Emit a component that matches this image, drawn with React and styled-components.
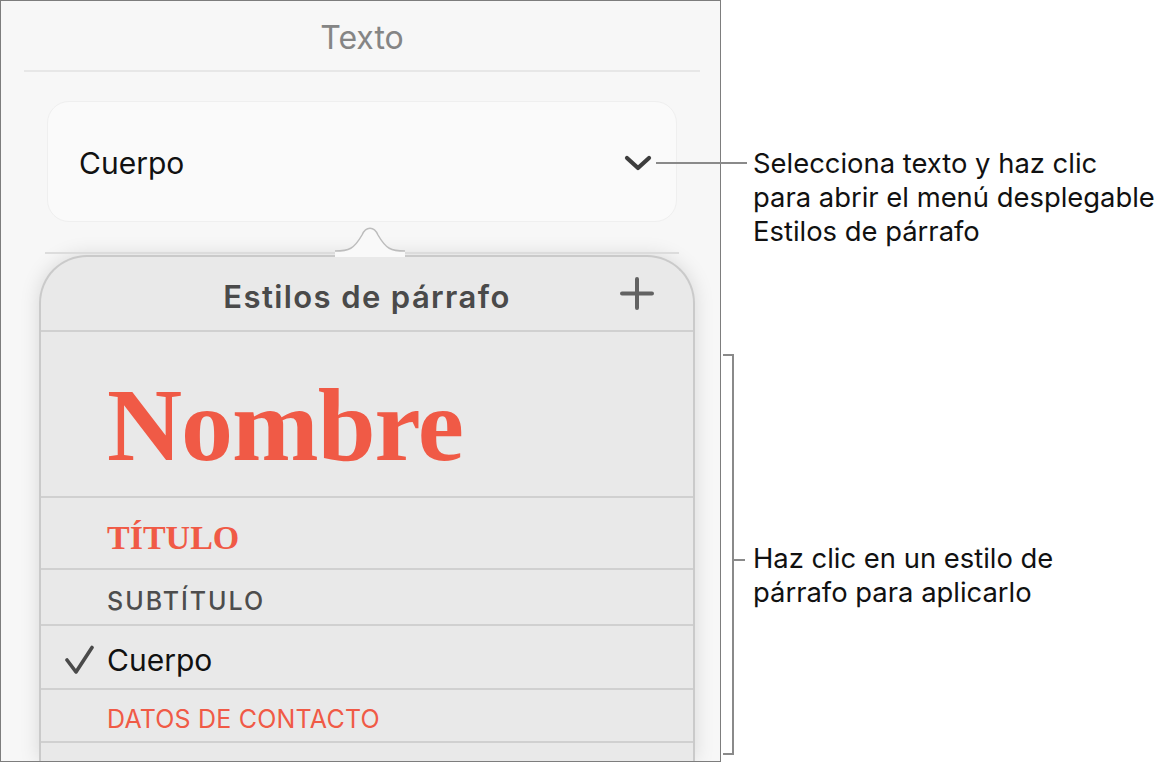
import React from 'react';
import styled, { createGlobalStyle } from 'styled-components';

const GlobalStyle = createGlobalStyle`
  html, body {
    margin: 0;
    padding: 0;
    background: #ffffff;
  }
  body {
    font-family: Inter, "Liberation Sans", Arial, sans-serif;
  }
`;

const SANS = `Inter, "Liberation Sans", Arial, sans-serif`;
const SERIF = `"Liberation Serif", "Times New Roman", serif`;
const ACCENT = '#f05a46';

const Page = styled.div`
  position: relative;
  width: 1168px;
  height: 763px;
  display: flex;
  overflow: hidden;
`;

const Panel = styled.div`
  width: 721px;
  height: 762px;
  box-sizing: border-box;
  border: 1px solid #7d7d7d;
  background: #f7f7f7;
  display: flex;
  flex-direction: column;
  overflow: hidden;
`;

const PanelHeader = styled.div`
  margin: 0 20px 0 23px;
  height: 71px;
  flex-shrink: 0;
  border-bottom: 2px solid #e7e7e7;
  display: flex;
  align-items: center;
  justify-content: center;
  font-family: ${SANS};
  font-size: 32px;
  color: #858585;
  padding-top: 3px;
  box-sizing: border-box;
`;

const StyleSelect = styled.div`
  margin: 29px 0 0 46px;
  width: 630px;
  height: 121px;
  flex-shrink: 0;
  box-sizing: border-box;
  border: 1px solid #efefef;
  border-radius: 22px;
  background: #fafafa;
  display: flex;
  align-items: center;
  justify-content: space-between;
  padding: 2px 24px 0 31px;
`;

const SelectLabel = styled.span`
  font-family: ${SANS};
  font-size: 30px;
  color: #111;
`;

const Divider = styled.div`
  position: relative;
  flex-shrink: 0;
  margin: 30px 0 0 44px;
  width: 634px;
  height: 2px;
  background: #dcdcdc;
`;

const Arrow = styled.svg`
  position: absolute;
  left: 290px;
  top: -31px;
  overflow: visible;
`;

const Popover = styled.div`
  margin: 1px 0 0 38px;
  width: 656px;
  flex: 1;
  box-sizing: border-box;
  background: #e9e9e9;
  border: 2px solid #cacaca;
  border-bottom: none;
  border-radius: 48px 48px 0 0;
  box-shadow: 0 0 20px rgba(0, 0, 0, 0.13);
  display: flex;
  flex-direction: column;
  overflow: hidden;
`;

const PopoverHeader = styled.div`
  height: 75px;
  flex-shrink: 0;
  box-sizing: border-box;
  border-bottom: 2px solid #d0d0d0;
  display: grid;
  grid-template-columns: 1fr auto 1fr;
  align-items: center;
  padding: 5px 39px 0 39px;
`;

const PopoverTitle = styled.span`
  grid-column: 2;
  font-family: ${SANS};
  font-size: 31px;
  font-weight: 600;
  letter-spacing: 1.4px;
  color: #4a4a4a;
`;

const PlusButton = styled.svg`
  grid-column: 3;
  justify-self: end;
  margin-top: -4px;
`;

const StyleRow = styled.div`
  height: ${({ $h }) => $h}px;
  flex-shrink: 0;
  box-sizing: border-box;
  border-bottom: 2px solid #d0d0d0;
  display: flex;
  align-items: center;
  padding: ${({ $pad }) => $pad || 0}px 0 0 24px;
`;

const CheckSlot = styled.div`
  width: 42px;
  display: flex;
  align-items: center;
`;

const NameStyle = styled.span`
  font-family: ${SERIF};
  font-weight: 700;
  font-size: 104px;
  letter-spacing: -1px;
  color: ${ACCENT};
`;

const TitleStyle = styled.span`
  font-family: ${SERIF};
  font-weight: 700;
  font-size: 34px;
  color: ${ACCENT};
`;

const SubtitleStyle = styled.span`
  font-family: ${SANS};
  font-weight: 500;
  font-size: 25px;
  letter-spacing: 2px;
  color: #4d4d4d;
`;

const BodyStyle = styled.span`
  font-family: ${SANS};
  font-size: 30px;
  color: #111;
`;

const ContactStyle = styled.span`
  font-family: ${SANS};
  font-size: 25px;
  letter-spacing: 0.2px;
  color: ${ACCENT};
`;

/* annotations drawn over the screenshot */
const Callout = styled.div`
  position: absolute;
  left: ${({ $x }) => $x}px;
  top: ${({ $y }) => $y}px;
  display: flex;
  align-items: flex-start;
`;

const Leader = styled.div`
  width: ${({ $w }) => $w}px;
  height: 2px;
  margin-top: 16px;
  background: #8a8a8a;
  flex-shrink: 0;
`;

const CalloutText = styled.p`
  margin: 0 0 0 ${({ $gap }) => $gap}px;
  font-family: ${SANS};
  font-size: 27.4px;
  line-height: 34px;
  color: #111;
  white-space: nowrap;
`;

const Bracket = styled.div`
  position: absolute;
  left: 723px;
  top: 354px;
  width: 9px;
  height: 397px;
  border: 2px solid #8a8a8a;
  border-left: none;
`;

const BracketTick = styled.div`
  position: absolute;
  left: 100%;
  top: 203px;
  width: 13px;
  height: 2px;
  background: #8a8a8a;
`;

const Chevron = () => (
  <svg width="28" height="18" viewBox="0 0 28 18">
    <polyline points="3,4 14,14 25,4" fill="none" stroke="#3d3d3d" strokeWidth="4.2" strokeLinecap="round" strokeLinejoin="round" />
  </svg>
);

const Check = () => (
  <svg width="30" height="30" viewBox="0 0 30 30">
    <polyline points="2,15 11,27 27,2.5" fill="none" stroke="#4a4a4a" strokeWidth="3.6" strokeLinecap="round" strokeLinejoin="round" />
  </svg>
);

export default function App() {
  return (
    <Page>
      <GlobalStyle />
      <Panel>
        <PanelHeader>Texto</PanelHeader>
        <StyleSelect>
          <SelectLabel>Cuerpo</SelectLabel>
          <Chevron />
        </StyleSelect>
        <Divider>
          <Arrow width="70" height="36" viewBox="0 0 70 36">
            <path d="M0 30 C14 30 19 28 27 14 C31 5 39 5 43 14 C51 28 56 30 70 30 L70 36 L0 36 Z" fill="#f9f9f9" />
            <path d="M0 30 C14 30 19 28 27 14 C31 5 39 5 43 14 C51 28 56 30 70 30" fill="none" stroke="#bdbdbd" strokeWidth="1.5" />
          </Arrow>
        </Divider>
        <Popover>
          <PopoverHeader>
            <PopoverTitle>Estilos de párrafo</PopoverTitle>
            <PlusButton width="34" height="34" viewBox="0 0 34 34">
              <path d="M17 2 V31 M2 16.5 H32" stroke="#626262" strokeWidth="4" strokeLinecap="round" />
            </PlusButton>
          </PopoverHeader>
          <StyleRow $h={166} $pad={20}>
            <CheckSlot />
            <NameStyle>Nombre</NameStyle>
          </StyleRow>
          <StyleRow $h={72} $pad={9}>
            <CheckSlot />
            <TitleStyle>TÍTULO</TitleStyle>
          </StyleRow>
          <StyleRow $h={56} $pad={8}>
            <CheckSlot />
            <SubtitleStyle>SUBTÍTULO</SubtitleStyle>
          </StyleRow>
          <StyleRow $h={64} $pad={6}>
            <CheckSlot>
              <Check />
            </CheckSlot>
            <BodyStyle>Cuerpo</BodyStyle>
          </StyleRow>
          <StyleRow $h={53} $pad={7}>
            <CheckSlot />
            <ContactStyle>DATOS DE CONTACTO</ContactStyle>
          </StyleRow>
          <StyleRow $h={60} />
        </Popover>
      </Panel>

      <Callout $x={656} $y={146}>
        <Leader $w={91} />
        <CalloutText $gap={6}>
          Selecciona texto y haz clic
          <br />
          para abrir el menú desplegable
          <br />
          Estilos de párrafo
        </CalloutText>
      </Callout>

      <Bracket>
        <BracketTick />
      </Bracket>
      <Callout $x={747} $y={541}>
        <CalloutText $gap={6}>
          Haz clic en un estilo de
          <br />
          párrafo para aplicarlo
        </CalloutText>
      </Callout>
    </Page>
  );
}
